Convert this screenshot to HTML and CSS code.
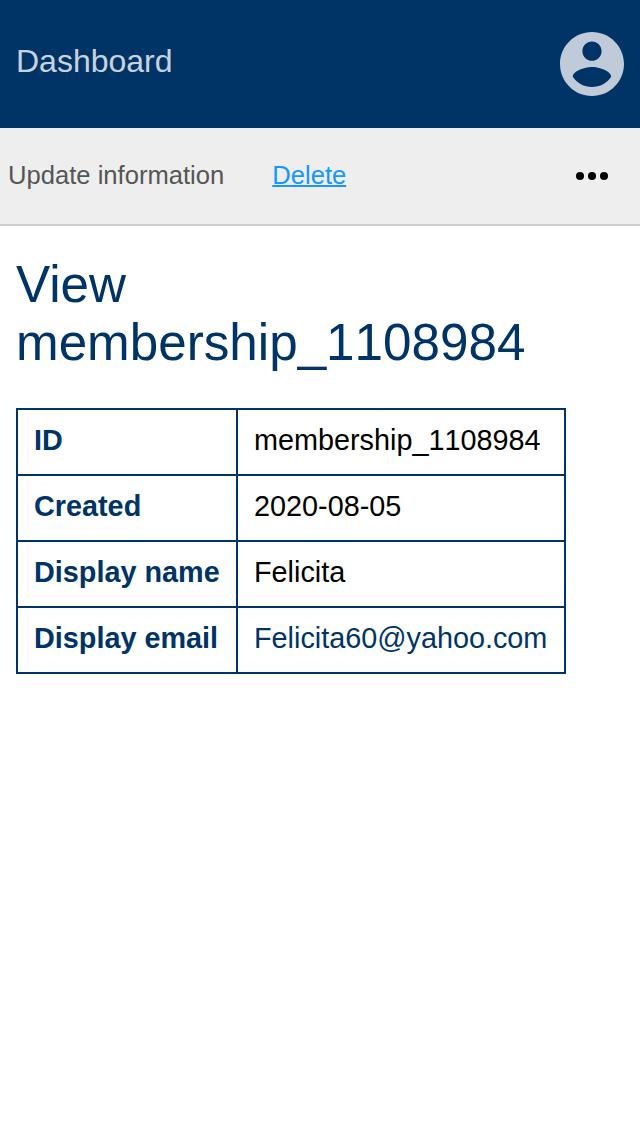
FILE: index.html
```html
<!DOCTYPE html>
<html lang="en">
<head>
<meta charset="utf-8">
<title>View membership</title>
<link rel="stylesheet" href="styles.css">
</head>
<body>
<header class="topbar">
  <a class="brand">Dashboard</a>
  <svg class="account" viewBox="2 2 20 20"><path d="M12 2C6.48 2 2 6.48 2 12s4.480 10 10 10 10-4.480 10-10S17.520 2 12 2zm0 3c1.660 0 3 1.340 3 3s-1.340 3-3 3-3-1.340-3-3 1.340-3 3-3zm0 14.200c-2.500 0-4.710-1.280-6-3.220.030-1.990 4-3.080 6-3.080 1.990 0 5.970 1.090 6 3.080-1.290 1.940-3.500 3.220-6 3.220z"/></svg>
</header>
<nav class="actions">
  <a class="update">Update information</a>
  <a class="delete">Delete</a>
  <svg class="more" viewBox="0 0 32 8"><circle cx="4" cy="4" r="4"/><circle cx="16" cy="4" r="4"/><circle cx="28" cy="4" r="4"/></svg>
</nav>
<main class="content">
  <h1 class="title">View <span class="record-id">membership_1108984</span></h1>
  <table class="details">
    <tr><th>ID</th><td class="record-id">membership_1108984</td></tr>
    <tr><th>Created</th><td>2020-08-05</td></tr>
    <tr><th>Display name</th><td>Felicita</td></tr>
    <tr><th>Display email</th><td><a class="email">Felicita60@yahoo.com</a></td></tr>
  </table>
</main>
</body>
</html>
```
FILE: styles.css
```css
* { box-sizing: border-box; }
body { margin: 0; background: #fff; color: #000; font-family: "Liberation Sans", Arial, sans-serif; }
.topbar { display: flex; align-items: center; justify-content: space-between; height: 128px; padding: 0 16px; background: #036; }
.brand { padding-bottom: 7px; color: rgba(255, 255, 255, .8); font-size: 32px; line-height: 36px; }
.account { width: 64px; height: 64px; fill: rgba(255, 255, 255, .75); }
.actions { display: flex; align-items: center; height: 98px; padding: 0 32px 0 8px; border-bottom: 2px solid #ccc; background: #eee; font-size: 25.6px; line-height: 30px; }
.update, .delete { padding-bottom: 2px; }
.update { color: #555; }
.delete { margin-left: 48px; color: #1597ff; text-decoration: underline 2px; }
.more { width: 32px; height: 8px; margin-left: auto; }
.content { padding: 30px 16px; }
.title { margin: 0 0 36px; color: #036; font-size: 51.2px; font-weight: 400; line-height: 58px; }
.record-id { font-kerning: none; }
.details { width: 550px; table-layout: fixed; border-collapse: collapse; font-size: 28.8px; line-height: 32px; }
.details th, .details td { height: 66px; padding: 0 16px 4px; border: 2px solid #036; text-align: left; white-space: nowrap; }
.details th { width: 220px; color: #036; }
.email { color: #036; }
```
